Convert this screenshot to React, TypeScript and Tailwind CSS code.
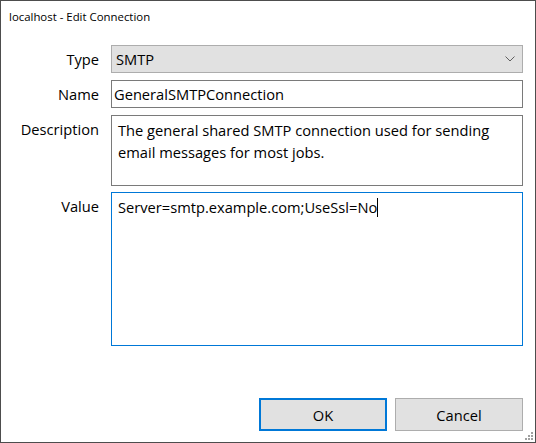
import React from "react";

const font = { fontFamily: '"Open Sans", "Noto Sans", sans-serif' };

export default function App() {
  return (
    <div
      className="relative w-[536px] h-[443px] bg-white border border-[#4d4d4d] flex flex-col text-black"
      style={font}
    >
      <div className="h-[32px] flex items-center pl-[8px] text-[11.4px] leading-none">
        localhost - Edit Connection
      </div>
      <div className="flex-1 flex flex-col pt-[12px] pr-[12px] text-[14.67px]">
        <div className="grid grid-cols-[98px_1fr] gap-x-[12px] gap-y-[7px]">
          <div className="h-[28px] flex items-center justify-end">Type</div>
          <div className="h-[28px] flex items-center justify-between bg-[#e1e1e1] border border-[#adadad] pl-[4px] pr-[6px]">
            <span>SMTP</span>
            <svg width="10" height="6" viewBox="0 0 10 6" className="mr-[1px]">
              <path d="M0.5 0.5 L5 5 L9.5 0.5" fill="none" stroke="#606060" strokeWidth="1" />
            </svg>
          </div>

          <div className="h-[28px] flex items-center justify-end">Name</div>
          <div className="h-[28px] flex items-center border border-[#7a7a7a] pl-[2px]">
            GeneralSMTPConnection
          </div>

          <div className="flex justify-end pt-[3px] leading-[22px]">Description</div>
          <div className="h-[71px] border border-[#7a7a7a] pl-[6px] pr-[6px] pt-[3px] leading-[22px]">
            The general shared SMTP connection used for sending email messages for most jobs.
          </div>

          <div className="flex justify-end pt-[3px] leading-[22px] mt-[-1px]">Value</div>
          <div className="h-[154px] border border-[#0078d7] pl-[6px] pt-[3px] leading-[22px] mt-[-1px]">
            <span>Server=smtp.example.com;UseSsl=No</span>
            <span className="inline-block w-px h-[19px] bg-black align-[-4px]" />
          </div>
        </div>
        <div className="flex-1" />
        <div className="flex justify-end gap-[8px] pb-[11px]">
          <div className="w-[128px] h-[33px] flex items-center justify-center bg-[#e1e1e1] border-2 border-[#0078d7]">
            OK
          </div>
          <div className="w-[128px] h-[33px] flex items-center justify-center bg-[#e1e1e1] border border-[#adadad]">
            Cancel
          </div>
        </div>
      </div>
      <svg
        className="absolute right-[1px] bottom-[1px]"
        width="9"
        height="9"
        viewBox="0 0 9 9"
      >
        <rect x="6" y="0" width="2" height="2" fill="#a0a0a0" />
        <rect x="3" y="3" width="2" height="2" fill="#a0a0a0" />
        <rect x="6" y="3" width="2" height="2" fill="#a0a0a0" />
        <rect x="0" y="6" width="2" height="2" fill="#a0a0a0" />
        <rect x="3" y="6" width="2" height="2" fill="#a0a0a0" />
        <rect x="6" y="6" width="2" height="2" fill="#a0a0a0" />
      </svg>
    </div>
  );
}
